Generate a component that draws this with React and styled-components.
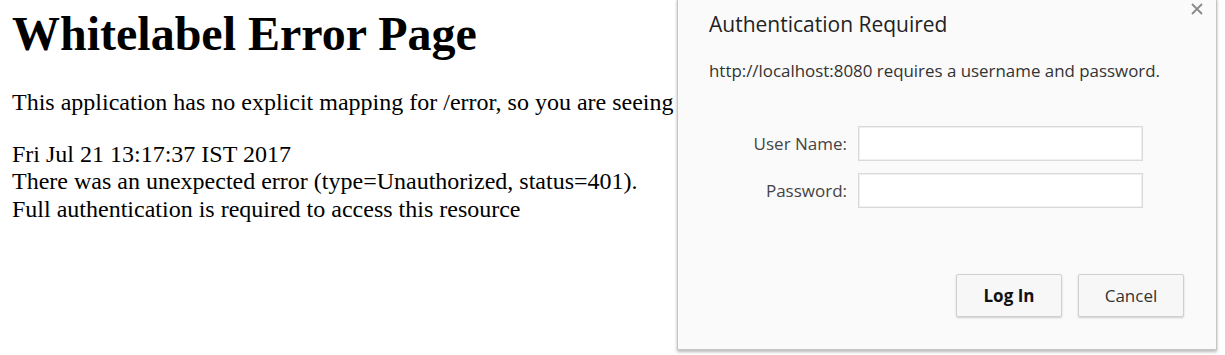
import React from 'react'
import styled, { createGlobalStyle } from 'styled-components';

const GlobalStyle = createGlobalStyle`
html, body {
  margin: 0;
  padding: 0;
  background: #fff;
}
body {
  font-family: "Liberation Serif", "Times New Roman", serif;
  color: #000;
  overflow: hidden;
}
`;

const Page = styled.div`
position: relative;
width: 1225px;
height: 355px;
padding: 6px 12px 0 12px;
box-sizing: border-box;
overflow: hidden;
`;

const Heading = styled.h1`
margin: 0 0 28px 0;
font-size: 48px;
font-weight: bold;
line-height: 55px;
white-space: nowrap;
`;

const Para = styled.p`
margin: 0 0 24px 0;
font-size: 24px;
line-height: 27.6px;
white-space: nowrap;
`;

const Dialog = styled.div`
position: absolute;
left: 677px;
top: -2px;
width: 540px;
height: 352px;
box-sizing: border-box;
background: #fafafa;
border: 1px solid #c6c6c6;
box-shadow: 0 2px 3px rgba(0,0,0,0.28);
padding: 12px 32px 32px 31px;
display: flex;
flex-direction: column;
font-family: "Open Sans", "Noto Sans", sans-serif;
`;

const Close = styled.button`
position: absolute;
top: 3px;
right: 12px;
width: 14px;
height: 14px;
padding: 0;
border: none;
background: none;
cursor: pointer;
`;

const Title = styled.div`
font-size: 21px;
line-height: 26px;
color: #222;
`;

const Message = styled.div`
margin-top: 22px;
font-size: 16.9px;
line-height: 24px;
color: #333;
`;

const Form = styled.div`
margin-top: 43px;
display: grid;
grid-template-columns: 138px 285px;
column-gap: 11px;
row-gap: 12px;
align-items: center;
`;

const Label = styled.label`
text-align: right;
font-size: 17px;
color: #444;
`;

const Input = styled.input`
height: 35px;
box-sizing: border-box;
border: 1px solid #dadada;
box-shadow: inset 0 0 0 1px #efefef;
background: #fff;
outline: none;
padding: 0 8px;
font-size: 15px;
`;

const Actions = styled.div`
margin-top: auto;
display: flex;
justify-content: flex-end;
gap: 16px;
`;

const Button = styled.button`
width: 106px;
height: 43px;
box-sizing: border-box;
background: #f7f7f7;
border: 1px solid #d0d0d0;
border-radius: 2px;
box-shadow: 0 1px 2px rgba(0,0,0,0.18);
font-family: "Open Sans", "Noto Sans", sans-serif;
font-size: 17px;
font-weight: ${p => (p.$primary ? 700 : 400)};
color: ${p => (p.$primary ? '#111' : '#333')};
cursor: pointer;
`;

export default function App() {
  return (
    <>
      <GlobalStyle />
      <Page>
        <Heading>Whitelabel Error Page</Heading>
        <Para>This application has no explicit mapping for /error, so you are seeing this as a fallback.</Para>
        <Para>
          Fri Jul 21 13:17:37 IST 2017<br />
          There was an unexpected error (type=Unauthorized, status=401).<br />
          Full authentication is required to access this resource
        </Para>
        <Dialog>
          <Close aria-label="Close">
            <svg width="14" height="14" viewBox="0 0 14 14">
              <path d="M2 2 L12 12 M12 2 L2 12" stroke="#8a8a8a" strokeWidth="1.8" />
            </svg>
          </Close>
          <Title>Authentication Required</Title>
          <Message>http://localhost:8080 requires a username and password.</Message>
          <Form>
            <Label>User Name:</Label>
            <Input type="text" />
            <Label>Password:</Label>
            <Input type="password" />
          </Form>
          <Actions>
            <Button $primary>Log In</Button>
            <Button>Cancel</Button>
          </Actions>
        </Dialog>
      </Page>
    </>
  )
}
